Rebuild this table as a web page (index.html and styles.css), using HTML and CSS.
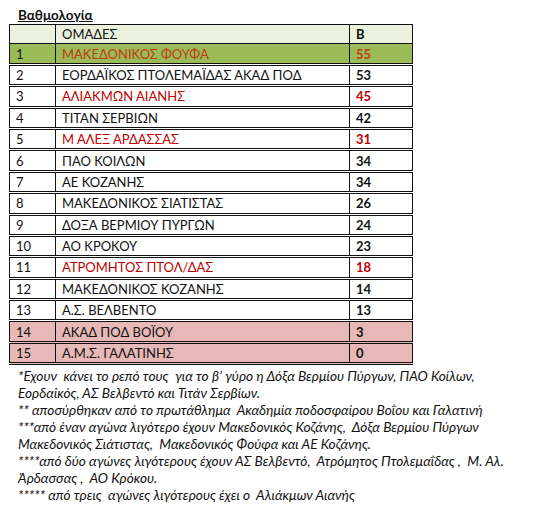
FILE: index.html
```html
<!DOCTYPE html>
<html>
<head>
<meta charset="utf-8">
<link rel="stylesheet" href="styles.css">
</head>
<body>
<div class="page">
  <h1 class="title">Βαθμολογία</h1>
  <table class="standings">
    <tr class="head"><td class="pos"></td><td class="team">ΟΜΑΔΕΣ</td><td class="pts">Β</td></tr>
    <tr class="first red1"><td class="pos">1</td><td class="team">ΜΑΚΕΔΟΝΙΚΟΣ ΦΟΥΦΑ</td><td class="pts">55</td></tr>
    <tr><td class="pos">2</td><td class="team">ΕΟΡΔΑΪΚΟΣ ΠΤΟΛΕΜΑΪΔΑΣ ΑΚΑΔ ΠΟΔ</td><td class="pts">53</td></tr>
    <tr class="red"><td class="pos">3</td><td class="team">ΑΛΙΑΚΜΩΝ ΑΙΑΝΗΣ</td><td class="pts">45</td></tr>
    <tr><td class="pos">4</td><td class="team">ΤΙΤΑΝ ΣΕΡΒΙΩΝ</td><td class="pts">42</td></tr>
    <tr class="red"><td class="pos">5</td><td class="team">Μ ΑΛΕΞ ΑΡΔΑΣΣΑΣ</td><td class="pts">31</td></tr>
    <tr><td class="pos">6</td><td class="team">ΠΑΟ ΚΟΙΛΩΝ</td><td class="pts">34</td></tr>
    <tr><td class="pos">7</td><td class="team">ΑΕ ΚΟΖΑΝΗΣ</td><td class="pts">34</td></tr>
    <tr><td class="pos">8</td><td class="team">ΜΑΚΕΔΟΝΙΚΟΣ ΣΙΑΤΙΣΤΑΣ</td><td class="pts">26</td></tr>
    <tr><td class="pos">9</td><td class="team">ΔΟΞΑ ΒΕΡΜΙΟΥ ΠΥΡΓΩΝ</td><td class="pts">24</td></tr>
    <tr><td class="pos">10</td><td class="team">ΑΟ ΚΡΟΚΟΥ</td><td class="pts">23</td></tr>
    <tr class="red"><td class="pos">11</td><td class="team">ΑΤΡΟΜΗΤΟΣ ΠΤΟΛ/ΔΑΣ</td><td class="pts">18</td></tr>
    <tr><td class="pos">12</td><td class="team">ΜΑΚΕΔΟΝΙΚΟΣ ΚΟΖΑΝΗΣ</td><td class="pts">14</td></tr>
    <tr><td class="pos">13</td><td class="team">Α.Σ. ΒΕΛΒΕΝΤΟ</td><td class="pts">13</td></tr>
    <tr class="out"><td class="pos">14</td><td class="team">ΑΚΑΔ ΠΟΔ ΒΟΪΟΥ</td><td class="pts">3</td></tr>
    <tr class="out"><td class="pos">15</td><td class="team">Α.Μ.Σ. ΓΑΛΑΤΙΝΗΣ</td><td class="pts">0</td></tr>
  </table>
  <div class="notes">
    <p>*Εχουν&nbsp; κάνει το ρεπό τους&nbsp; για το β’ γύρο η Δόξα Βερμίου Πύργων, ΠΑΟ Κοίλων,</p>
    <p>Εορδαϊκός, ΑΣ Βελβεντό και Τιτάν Σερβίων.</p>
    <p>** αποσύρθηκαν από το πρωτάθλημα&nbsp; Ακαδημία ποδοσφαίρου Βοΐου και Γαλατινή</p>
    <p>***από έναν αγώνα λιγότερο έχουν Μακεδονικός Κοζάνης,&nbsp; Δόξα Βερμίου Πύργων</p>
    <p>Μακεδονικός Σιάτιστας,&nbsp; Μακεδονικός Φούφα και ΑΕ Κοζάνης.</p>
    <p>****από δύο αγώνες λιγότερους έχουν ΑΣ Βελβεντό,&nbsp; Ατρόμητος Πτολεμαΐδας ,&nbsp; Μ. Αλ.</p>
    <p>Άρδασσας ,&nbsp; ΑΟ Κρόκου.</p>
    <p>***** από τρεις&nbsp; αγώνες λιγότερους έχει ο&nbsp; Αλιάκμων Αιανής</p>
  </div>
</div>
</body>
</html>
```

FILE: styles.css
```css
html, body {
  margin: 0;
  padding: 0;
  background: #ffffff;
}
.page {
  padding: 7px 0 0 9px;
  font-family: "Lato", "Noto Sans", sans-serif;
  color: #111111;
  font-size: 13px;
}
.title {
  margin: 0 0 0 9px;
  font-size: 13.5px;
  line-height: 17px;
  font-weight: bold;
  text-decoration: underline;
}
.standings {
  border-collapse: collapse;
  width: 404px;
}
.standings td {
  border-left: 1px solid #111;
  border-right: 1px solid #111;
  border-top: 1px solid #111;
  border-bottom: 3px double #111;
  padding: 0;
  height: 18.4px;
  line-height: 18px;
  white-space: nowrap;
}
.standings .head td {
  border-bottom: 1px solid #111;
  background: #ebf1de;
}
.pos {
  width: 39px;
  padding-left: 6px !important;
}
.team {
  width: 287px;
  padding-left: 6px !important;
}
.pts {
  padding-left: 6px !important;
  font-weight: bold;
}
.first td {
  background: #9bbb59;
}
.red1 .team, .red1 .pts {
  color: #c0391b;
}
.red .team, .red .pts {
  color: #c00000;
}
.out td {
  background: #e6b8b7;
}
.notes {
  margin: 3px 0 0 9px;
  font-style: italic;
  font-size: 13.7px;
}
.notes p {
  margin: 0;
  line-height: 16.9px;
  white-space: nowrap;
}
```
